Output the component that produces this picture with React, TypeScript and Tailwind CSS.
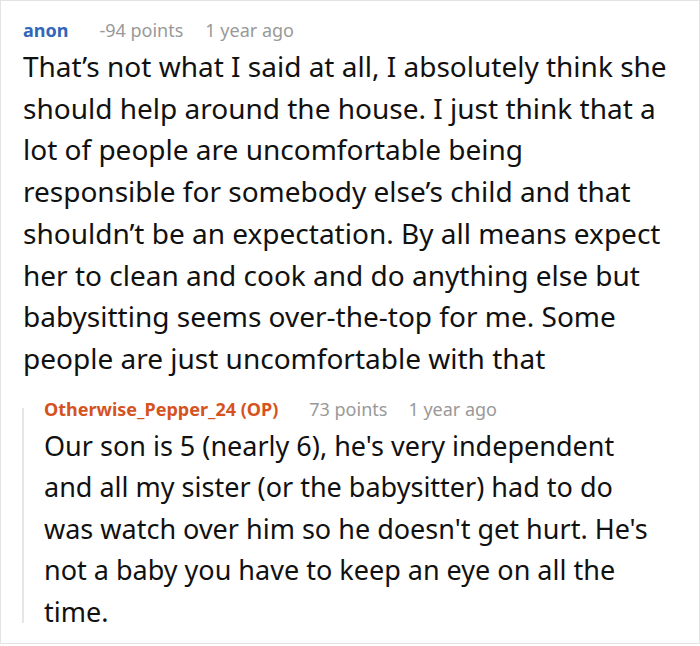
export default function App() {
  return (
    <div className="w-[700px] h-[646px] bg-white font-['Noto_Sans',sans-serif]">
      <div className="h-[644px] border border-[#e3e3e3] pl-[22px] pr-[18px] pt-[17px]">
        <div className="flex items-baseline text-[18px] leading-[24px]">
          <span className="font-bold text-[#3366b8]">anon</span>
          <span className="ml-[31px] text-[#999999]">-94 points</span>
          <span className="ml-[22px] text-[#999999]">1 year ago</span>
        </div>
        <p className="mt-[4px] text-[28px] leading-[41.7px] text-[#111111]">
          That’s not what I said at all, I absolutely think she should help around the house. I just think that a lot of people are uncomfortable being responsible for somebody else’s child and that shouldn’t be an expectation. By all means expect her to clean and cook and do anything else but babysitting seems over-the-top for me. Some people are just uncomfortable with that
        </p>
        <div className="relative mt-[17px] -ml-[1px] pl-[22px]">
          <div className="absolute left-0 top-[11px] bottom-[9px] w-[2px] bg-[#e6e6e6]" />
          <div className="flex items-baseline text-[18px] leading-[24px]">
            <span className="font-bold text-[#d4531f]">Otherwise_Pepper_24 (OP)</span>
            <span className="ml-[31px] text-[#999999]">73 points</span>
            <span className="ml-[21px] text-[#999999]">1 year ago</span>
          </div>
          <p className="mt-[4px] whitespace-nowrap text-[27px] leading-[41.5px] text-[#111111]">
            Our son is 5 (nearly 6), he's very independent
            <br />
            and all my sister (or the babysitter) had to do
            <br />
            was watch over him so he doesn't get hurt. He's
            <br />
            not a baby you have to keep an eye on all the
            <br />
            time.
          </p>
        </div>
      </div>
    </div>
  );
}
